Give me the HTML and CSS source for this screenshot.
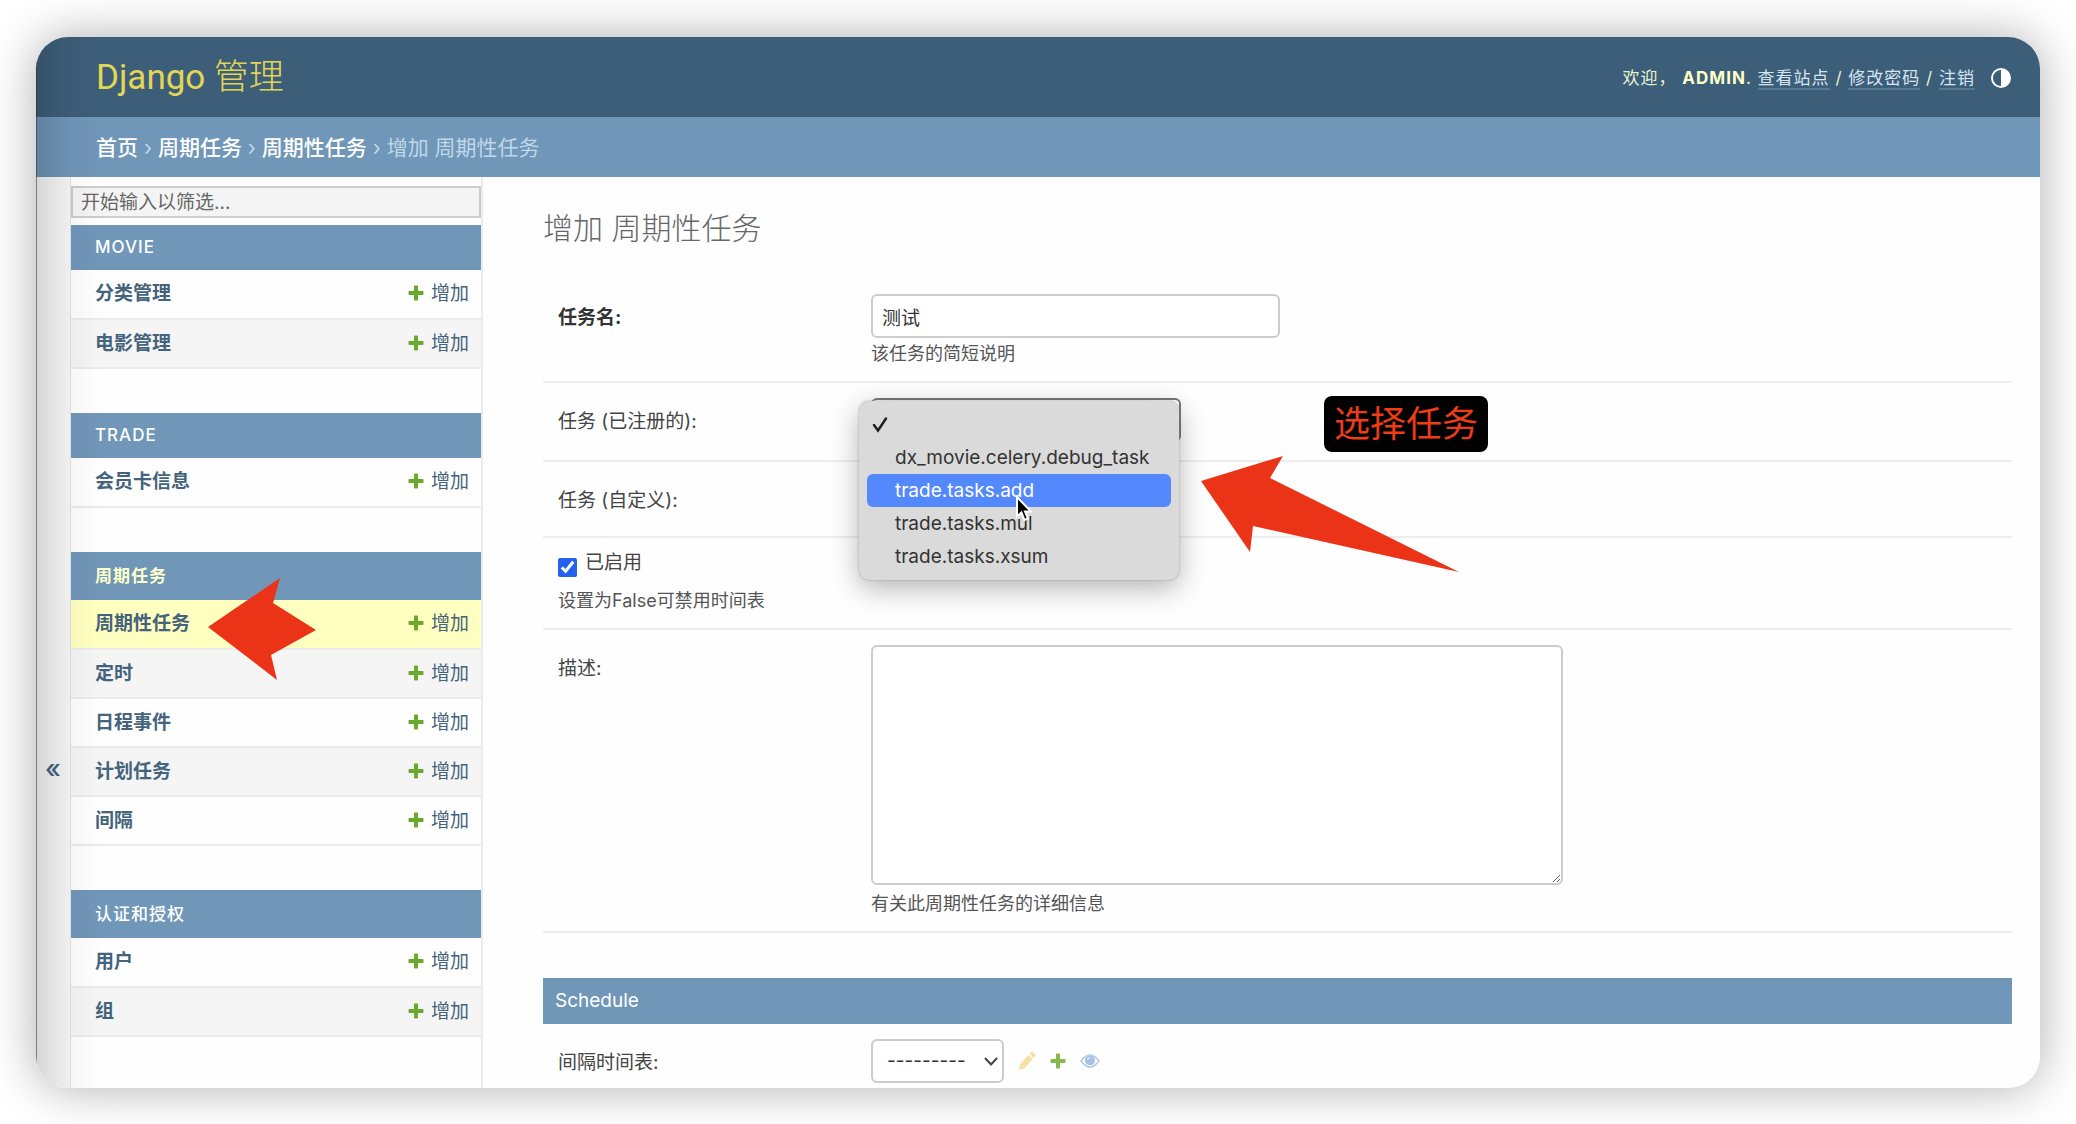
FILE: index.html
```html
<!DOCTYPE html>
<html lang="zh-CN">
<head>
<meta charset="utf-8">
<meta name="viewport" content="width=device-width, initial-scale=1">
<title>增加 周期性任务 | Django 管理</title>
<link rel="stylesheet" href="styles.css">
</head>
<body>
<svg class="sprite" aria-hidden="true">
  <symbol id="plus" viewBox="0 0 16 16"><path d="M6 1.2Q6 .5 6.700 .5H9.300Q10 .5 10 1.200V6H14.800Q15.500 6 15.500 6.700V9.300Q15.500 10 14.800 10H10V14.800Q10 15.500 9.300 15.500H6.700Q6 15.500 6 14.800V10H1.200Q.5 10 .5 9.300V6.700Q.5 6 1.200 6H6Z"/></symbol>
</svg>
<div class="window">
  <header class="header">
    <h1 class="brand"><a href="#"><span class="latin">Django</span> 管理</a></h1>
    <div class="user-tools">
      <div><span class="welcome">欢迎，</span> <strong>ADMIN</strong>. <a href="#">查看站点</a> / <a href="#">修改密码</a> / <a href="#">注销</a></div>
      <button class="theme" type="button" aria-label="切换主题">
        <svg viewBox="0 0 20 20" width="20" height="20"><circle cx="10" cy="10" r="9" fill="none" stroke="#fff" stroke-width="2"/><path d="M10 1a9 9 0 0 1 0 18z" fill="#fff"/></svg>
      </button>
    </div>
  </header>
  <nav class="breadcrumbs" aria-label="面包屑">
    <a href="#">首页</a> › <a href="#">周期任务</a> › <a href="#">周期性任务</a> › 增加 周期性任务
  </nav>
  <div class="main">
    <button class="toggle" type="button" aria-label="切换导航">«</button>
    <nav class="sidebar">
      <input class="filter" type="search" placeholder="开始输入以筛选..." aria-label="筛选导航">
      <table class="module">
        <caption><a href="#">MOVIE</a></caption>
        <tr><th scope="row"><a href="#">分类管理</a></th><td><a href="#"><svg class="plus"><use href="#plus"/></svg>增加</a></td></tr>
        <tr><th scope="row"><a href="#">电影管理</a></th><td><a href="#"><svg class="plus"><use href="#plus"/></svg>增加</a></td></tr>
      </table>
      <table class="module">
        <caption><a href="#">TRADE</a></caption>
        <tr><th scope="row"><a href="#">会员卡信息</a></th><td><a href="#"><svg class="plus"><use href="#plus"/></svg>增加</a></td></tr>
      </table>
      <table class="module current">
        <caption class="tall"><a href="#">周期任务</a></caption>
        <tr class="selected"><th scope="row"><a href="#">周期性任务</a>
          <svg class="pointer-small" viewBox="0 0 108 102" aria-hidden="true"><path d="M0 49 72 0 65 25 108 52 63 77 69 102Z"/></svg></th><td><a href="#"><svg class="plus"><use href="#plus"/></svg>增加</a></td></tr>
        <tr><th scope="row"><a href="#">定时</a></th><td><a href="#"><svg class="plus"><use href="#plus"/></svg>增加</a></td></tr>
        <tr><th scope="row"><a href="#">日程事件</a></th><td><a href="#"><svg class="plus"><use href="#plus"/></svg>增加</a></td></tr>
        <tr><th scope="row"><a href="#">计划任务</a></th><td><a href="#"><svg class="plus"><use href="#plus"/></svg>增加</a></td></tr>
        <tr><th scope="row"><a href="#">间隔</a></th><td><a href="#"><svg class="plus"><use href="#plus"/></svg>增加</a></td></tr>
      </table>
      <table class="module">
        <caption class="tall"><a href="#">认证和授权</a></caption>
        <tr><th scope="row"><a href="#">用户</a></th><td><a href="#"><svg class="plus"><use href="#plus"/></svg>增加</a></td></tr>
        <tr><th scope="row"><a href="#">组</a></th><td><a href="#"><svg class="plus"><use href="#plus"/></svg>增加</a></td></tr>
      </table>
    </nav>
    <main class="content">
      <h2 class="title">增加 周期性任务</h2>
      <form>
        <div class="row">
          <label class="required" for="name">任务名:</label>
          <div class="field">
            <input class="text" id="name" type="text" value="测试">
            <p class="help">该任务的简短说明</p>
          </div>
        </div>
        <div class="row">
          <label for="regtask">任务 (已注册的):</label>
          <div class="field select-field">
            <select class="select task-select" id="regtask"><option></option><option>dx_movie.celery.debug_task</option><option>trade.tasks.add</option><option>trade.tasks.mul</option><option>trade.tasks.xsum</option></select>
            <ul class="options">
              <li><svg class="check" viewBox="0 0 16 16"><path d="M2 8.500 6 14 14 2"/></svg></li>
              <li>dx_movie.celery.debug_task</li>
              <li class="active">trade.tasks.add</li>
              <li>trade.tasks.mul</li>
              <li>trade.tasks.xsum</li>
            </ul>
            <svg class="cursor" viewBox="0 0 18 27" aria-hidden="true"><path d="M2 2V21.500L6.500 17.500 9.500 25 13 23.500 10 16.500H16Z"/></svg>
            <span class="callout">选择任务</span>
            <svg class="pointer-large" viewBox="0 0 258 116" aria-hidden="true"><path d="M0 25 82 0 69 22 258 116 52 70 49 96Z"/></svg>
          </div>
        </div>
        <div class="row">
          <label for="task">任务 (自定义):</label>
          <div class="field"><input class="text short" id="task" type="text"></div>
        </div>
        <div class="row">
          <div class="field">
            <div class="check-line">
              <input class="tick" id="enabled" type="checkbox" checked>
              <label for="enabled">已启用</label>
            </div>
            <p class="help tick-help">设置为False可禁用时间表</p>
          </div>
        </div>
        <div class="row">
          <label for="desc">描述:</label>
          <div class="field">
            <textarea class="area" id="desc"></textarea>
            <p class="help">有关此周期性任务的详细信息</p>
          </div>
        </div>
        <h3 class="section">Schedule</h3>
        <div class="row">
          <label for="interval">间隔时间表:</label>
          <div class="field select-field related">
            <span class="drop">
              <select class="select" id="interval"><option>---------</option></select>
              <svg class="chevron" viewBox="0 0 14 9"><path d="M1 1 7 7.500 13 1"/></svg>
            </span>
            <a href="#" aria-label="修改"><svg width="18" height="20" viewBox="0 0 18 18" preserveAspectRatio="none" fill="#f3e2a4"><path d="M1 17 2 12 10.500 3.500 14.500 7.500 6 16ZM11.500 2.500 13 1Q14 0 15 1L17 3Q18 4 17 5L15.500 6.500Z"/></svg></a>
            <a href="#" aria-label="增加"><svg class="plus light"><use href="#plus"/></svg></a>
            <a href="#" aria-label="查看"><svg width="20" height="14" viewBox="0 0 20 14"><path d="M1 7Q10-5 19 7 10 19 1 7Z" fill="#fff" stroke="#b4c8e6" stroke-width="1.500"/><circle cx="10" cy="6.500" r="5" fill="#a9c1e6"/><path d="M7.500 6Q7.500 4 10 3.500" fill="none" stroke="#fff"/></svg></a>
          </div>
        </div>
      </form>
    </main>
  </div>
</div>
</body>
</html>
```
FILE: styles.css
```css
* { box-sizing: border-box; }

body {
  margin: 0;
  padding: 37px 36px 36px;
  height: 100vh;
  background: #fff;
  color: #444;
  font: 19px/24px Inter, "Noto Sans CJK SC", sans-serif;
}

a { color: inherit; text-decoration: none; }
h1, h2, h3, p, ul { margin: 0; padding: 0; font-weight: 400; }
button { border: 0; padding: 0; background: none; font: inherit; color: inherit; }
.sprite { position: absolute; width: 0; height: 0; }

.window {
  position: relative;
  display: flex;
  flex-direction: column;
  height: 100%;
  overflow: hidden;
  border-radius: 32px;
  background: #fefefe;
}
body::before {
  content: "";
  position: absolute;
  inset: 37px 36px 36px;
  border-radius: 32px;
  box-shadow: 0 0 48px rgba(0, 0, 0, .32);
}
/* soft shade along the left edge of the window */
.window::after {
  content: "";
  position: absolute;
  inset: 0 auto 0 0;
  width: 64px;
  border-left: 1px solid rgba(40, 40, 50, .6);
  background: linear-gradient(90deg, rgba(0, 0, 0, .13), rgba(0, 0, 0, .03) 50%, transparent);
  pointer-events: none;
}

.header {
  display: flex;
  align-items: center;
  justify-content: space-between;
  flex: none;
  height: 80px;
  padding: 2px 29px 0 60px;
  background: #3d5e79;
}
.brand { color: #e3d556; font-family: Roboto, "Noto Sans CJK SC", sans-serif; font-size: 35px; line-height: 48px; font-weight: 300; }
.latin { font-weight: 400; }
.user-tools { display: flex; align-items: center; gap: 16px; color: #e6f3d0; font-size: 17px; letter-spacing: 1px; }
.user-tools strong { color: #ffc; }
.user-tools a { border-bottom: 2px solid #557893; color: #d5e5f2; }
.theme { display: flex; }

.breadcrumbs {
  flex: none;
  height: 60px;
  padding: 2px 60px 0;
  background: #7096b8;
  color: #bfd8ea;
  font-size: 21px;
  line-height: 58px;
}
.breadcrumbs a { color: #fff; font-weight: 500; }

.main { display: flex; flex: 1; min-height: 0; overflow: hidden; }
.toggle {
  flex: none;
  width: 34px;
  height: calc(100vh + 60px);
  background: #f7f7f7;
  color: #44637c;
  font-size: 26px;
  line-height: 26px;
  font-weight: 500;
}

.sidebar { flex: none; width: 413px; padding-top: 9px; border-right: 2px solid #ebebeb; border-left: 1px solid #e2e2e2; }
.filter {
  display: block;
  width: 100%;
  height: 32px;
  margin-bottom: 7px;
  padding: 0 8px;
  border: 2px solid #ccc;
  border-radius: 0;
  background: #f4f4f4;
  font: inherit;
}
.filter::placeholder { color: #666; opacity: 1; }

.module { width: 100%; margin-bottom: 44px; border-collapse: collapse; color: #44637c; }
.module caption {
  padding: 0 24px;
  background: #7096b8;
  color: #fff;
  font-size: 17px;
  line-height: 45px;
  letter-spacing: 1px;
  font-weight: 500;
  text-align: left;
}
.module .tall { line-height: 48px; }
.module th, .module td { height: 49px; padding: 0; border-bottom: 2px solid #ebebeb; text-align: left; font-weight: 400; }
.module th { position: relative; padding-left: 24px; font-weight: 700; }
.module td { padding-right: 12px; text-align: right; }
.module tr:nth-child(even) { background: #f5f5f5; }
.current caption { color: #ffc; font-weight: 700; }
.module .selected { background: #ffffc0; }
.plus { width: 16px; height: 16px; margin-right: 7px; fill: #6aa92b; vertical-align: -1px; }
.light { margin: 0; fill: #86b84e; }

.pointer-small { position: absolute; z-index: 1; left: 137px; top: -22px; width: 108px; height: 102px; fill: #ea3317; }

.content { flex: 1; min-width: 0; padding: 30px 28px 0 60px; }
.title { margin-bottom: 29px; color: #666; font-size: 30px; line-height: 43px; font-weight: 300; }
.row { display: flex; padding: 15px; border-bottom: 2px solid #ededed; }
.row > label { flex: none; width: 313px; padding-top: 4px; line-height: 40px; }
.row > .required { color: #333; font-weight: 700; }
.field { position: relative; flex: 1; min-width: 0; }
.text, .select, .area {
  display: block;
  border: 2px solid #ccc;
  border-radius: 6px;
  background: #fff;
  color: #333;
  font: inherit;
}
.text { width: 409px; height: 44px; padding: 0 9px; }
.short { width: 300px; }
.area { width: 692px; height: 240px; margin-bottom: 7px; }
.help { margin-top: 4px; color: #555; font-size: 18px; line-height: 24px; }
.select { appearance: none; width: 133px; height: 44px; padding: 0 14px; }
.select-field { padding-bottom: 3px; }
.task-select { width: 310px; border-color: #777; }

.options {
  position: absolute;
  z-index: 1;
  left: -12px;
  top: 3px;
  width: 320px;
  padding: 7px 8px;
  border-radius: 10px;
  background: #dadada;
  box-shadow: 0 0 2px #999, 0 8px 28px rgba(0, 0, 0, .3);
  color: #333;
  list-style: none;
}
.options li { height: 33px; padding-left: 28px; border-radius: 6px; line-height: 33px; white-space: nowrap; }
.options .active { background: #5389fd; color: #fff; }
.check { display: block; width: 16px; height: 33px; margin-left: -23px; fill: none; stroke: #222; stroke-width: 2.500; stroke-linecap: round; }
.cursor { position: absolute; z-index: 2; left: 144px; top: 97px; width: 18px; height: 27px; fill: #000; stroke: #fff; stroke-width: 2; }
.callout {
  position: absolute;
  left: 453px;
  top: -2px;
  padding: 0 10px;
  border-radius: 8px;
  background: #000;
  color: #ef3c18;
  font-size: 36px;
  line-height: 56px;
}
.pointer-large { position: absolute; z-index: 1; left: 330px; top: 58px; width: 258px; height: 116px; fill: #ea3317; }

.check-line { display: flex; align-items: flex-start; gap: 8px; height: 20px; line-height: 20px; }
.tick { width: 19px; height: 19px; margin: 5px 0 0; accent-color: #2560ee; }
.tick-help { margin-top: 16px; }

.section { margin-top: 45px; padding: 0 12px; background: #7096b8; color: #fff; font-size: 19px; line-height: 46px; }
.related { display: flex; align-items: center; gap: 14px; }
.related a { display: flex; }
.drop { position: relative; }
.chevron { position: absolute; right: 6px; top: 18px; width: 14px; height: 9px; fill: none; stroke: #444; stroke-width: 2; }
```
